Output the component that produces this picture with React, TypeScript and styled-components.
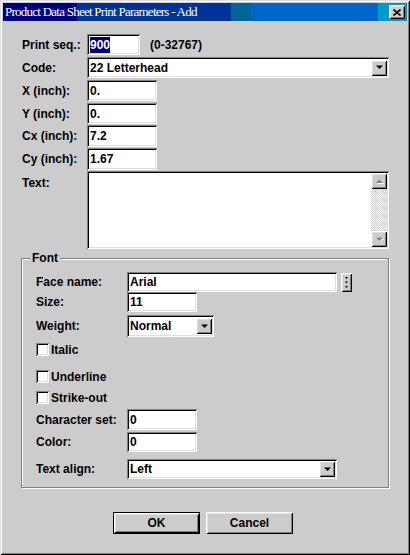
import React from 'react'
import styled, { createGlobalStyle, css } from 'styled-components'

const GRAY = '#cccccc'
const DARK = '#808080'
const LIGHT = '#dfdfdf'

const GlobalStyle = createGlobalStyle`
  html, body {
    margin: 0;
    padding: 0;
    background: ${GRAY};
  }
  body {
    font-family: 'Liberation Sans', Arial, sans-serif;
  }
`

const raised = css`
  background: ${GRAY};
  box-shadow: inset 1px 1px 0 #fff, inset -1px -1px 0 #000, inset 2px 2px 0 ${LIGHT},
    inset -2px -2px 0 ${DARK};
`

const sunken = css`
  background: #fff;
  box-shadow: inset 1px 1px 0 ${DARK}, inset -1px -1px 0 #fff, inset 2px 2px 0 #000,
    inset -2px -2px 0 ${LIGHT};
`

const Window = styled.div`
  width: 410px;
  height: 555px;
  box-sizing: border-box;
  padding: 3px;
  background: ${GRAY};
  box-shadow: inset 1px 1px 0 ${LIGHT}, inset -1px -1px 0 #000, inset 2px 2px 0 #fff,
    inset -2px -2px 0 ${DARK};
  display: flex;
  flex-direction: column;
`

const TitleBar = styled.div`
  height: 18px;
  display: flex;
  align-items: center;
  justify-content: space-between;
  padding: 0 2px;
  background: linear-gradient(
    to right,
    #000080 0 74px,
    #003399 74px 228px,
    #006699 228px 248px,
    #0066cc 248px 375px,
    #0099cc 375px
  );
`

const Title = styled.span`
  color: #fff;
  font-family: 'Liberation Serif', 'Times New Roman', serif;
  font-size: 13px;
  letter-spacing: -0.75px;
  white-space: nowrap;
`

const CloseButton = styled.div`
  ${raised};
  width: 16px;
  height: 14px;
  display: flex;
  align-items: center;
  justify-content: center;
`

const Body = styled.div`
  flex: 1;
  padding: 13px 18px 0 19px;
  display: flex;
  flex-direction: column;
`

const Row = styled.div<{ $top?: number; $h?: number }>`
  display: flex;
  align-items: center;
  margin-top: ${({ $top }) => $top ?? 0}px;
  height: ${({ $h }) => $h ?? 21}px;
`

const TopRow = styled(Row)`
  align-items: flex-start;
`

const Label = styled.div<{ $w: number }>`
  width: ${({ $w }) => $w}px;
  flex-shrink: 0;
  font-size: 12px;
  font-weight: bold;
  color: #000;
  white-space: nowrap;
`

const TopLabel = styled(Label)`
  padding-top: 5px;
`

const Field = styled.div<{ $w?: number; $h?: number }>`
  ${sunken};
  box-sizing: border-box;
  width: ${({ $w }) => ($w ? `${$w}px` : 'auto')};
  flex: ${({ $w }) => ($w ? '0 0 auto' : '1')};
  height: ${({ $h }) => $h ?? 21}px;
  padding: 0 2px 0 3px;
  display: flex;
  align-items: center;
  font-size: 12px;
  font-weight: bold;
  color: #000;
`

const Selected = styled.span`
  background: #000080;
  color: #fff;
  padding: 1px 0;
`

const Hint = styled.span`
  margin-left: 10px;
  font-size: 12px;
  font-weight: bold;
`

const ComboText = styled.span`
  flex: 1;
`

const DropButton = styled.div`
  ${raised};
  width: 16px;
  height: 16px;
  display: flex;
  align-items: center;
  justify-content: center;
`

const TextArea = styled.div`
  ${sunken};
  box-sizing: border-box;
  flex: 1;
  height: 78px;
  padding: 2px;
  display: flex;
  justify-content: flex-end;
`

const ScrollBar = styled.div`
  width: 16px;
  display: flex;
  flex-direction: column;
`

const ScrollButton = styled(DropButton)``

const Track = styled.div`
  flex: 1;
  background-color: ${GRAY};
  background-image: repeating-conic-gradient(#fff 0 25%, ${GRAY} 0 50%);
  background-size: 2px 2px;
`

const Group = styled.div`
  position: relative;
  margin: 9px 0 0 -1px;
  width: 368px;
  box-sizing: border-box;
  border: 1px solid ${DARK};
  box-shadow: inset 1px 1px 0 #fff, 1px 1px 0 #fff;
  padding: 13px 0 8px 14px;
`

const Legend = styled.span`
  position: absolute;
  top: -8px;
  left: 8px;
  padding: 0 2px;
  background: ${GRAY};
  font-size: 12px;
  font-weight: bold;
`

const SpinButton = styled.div`
  ${raised};
  width: 11px;
  height: 19px;
  margin-left: 4px;
  display: flex;
  align-items: center;
  justify-content: center;
`

const Check = styled.label<{ $top: number }>`
  display: flex;
  align-items: center;
  gap: 2px;
  height: 13px;
  margin-top: ${({ $top }) => $top}px;
  font-size: 12px;
  font-weight: bold;
`

const Box = styled.span`
  ${sunken};
  width: 13px;
  height: 13px;
  box-sizing: border-box;
`

const ButtonBar = styled.div`
  display: flex;
  justify-content: center;
  gap: 6px;
  margin-top: 24px;
  padding-right: 5px;
`

const Button = styled.div<{ $default?: boolean }>`
  ${raised};
  width: 87px;
  height: 22px;
  box-sizing: border-box;
  display: flex;
  align-items: center;
  justify-content: center;
  font-size: 12px;
  font-weight: bold;
  ${({ $default }) =>
    $default &&
    css`
      border: 1px solid #000;
    `}
`

const Arrow = ({ up, disabled }: { up?: boolean; disabled?: boolean }) => (
  <svg width="7" height="5" viewBox="0 0 7 5" style={{ overflow: 'visible' }}>
    {disabled && <path d={up ? 'M1 5h7L4.5 1.5z' : 'M1 1h7L4.5 4.5z'} fill="#fff" />}
    <path d={up ? 'M0 4h7L3.5 0.5z' : 'M0 0.5h7L3.5 4z'} fill={disabled ? DARK : '#000'} />
  </svg>
)

const Combo = ({ value, w, h }: { value: string; w?: number; h?: number }) => (
  <Field $w={w} $h={h}>
    <ComboText>{value}</ComboText>
    <DropButton>
      <Arrow />
    </DropButton>
  </Field>
)

const App: React.FC = () => {
  return (
    <Window>
      <GlobalStyle />
      <TitleBar>
        <Title>Product Data Sheet Print Parameters - Add</Title>
        <CloseButton>
          <svg width="8" height="7" viewBox="0 0 8 7">
            <path d="M0.5 0.5l7 6M7.5 0.5l-7 6" stroke="#000" strokeWidth="1.6" />
          </svg>
        </CloseButton>
      </TitleBar>
      <Body>
        <Row>
          <Label $w={65}>Print seq.:</Label>
          <Field $w={53}>
            <Selected>900</Selected>
          </Field>
          <Hint>(0-32767)</Hint>
        </Row>
        <Row $top={2}>
          <Label $w={65}>Code:</Label>
          <Combo value="22 Letterhead" />
        </Row>
        <Row $top={2}>
          <Label $w={65}>X (inch):</Label>
          <Field $w={70}>0.</Field>
        </Row>
        <Row $top={2}>
          <Label $w={65}>Y (inch):</Label>
          <Field $w={70}>0.</Field>
        </Row>
        <Row $top={1} $h={22}>
          <Label $w={65}>Cx (inch):</Label>
          <Field $w={70} $h={22}>7.2</Field>
        </Row>
        <Row $top={1} $h={22}>
          <Label $w={65}>Cy (inch):</Label>
          <Field $w={70} $h={22}>1.67</Field>
        </Row>
        <TopRow $top={1} $h={78}>
          <TopLabel $w={65}>Text:</TopLabel>
          <TextArea>
            <ScrollBar>
              <ScrollButton>
                <Arrow up disabled />
              </ScrollButton>
              <Track />
              <ScrollButton>
                <Arrow disabled />
              </ScrollButton>
            </ScrollBar>
          </TextArea>
        </TopRow>

        <Group>
          <Legend>Font</Legend>
          <Row $h={20}>
            <Label $w={91}>Face name:</Label>
            <Field $w={210} $h={20}>Arial</Field>
            <SpinButton>
              <svg width="3" height="11" viewBox="0 0 3 11">
                <path d="M0 0h3L1.5 2zM0 4.5h3L1.5 6.5zM0 9h3L1.5 11z" fill="#000" />
              </svg>
            </SpinButton>
          </Row>
          <Row $h={20}>
            <Label $w={91}>Size:</Label>
            <Field $w={70} $h={20}>11</Field>
          </Row>
          <Row $top={3} $h={22}>
            <Label $w={91}>Weight:</Label>
            <Combo value="Normal" w={87} h={22} />
          </Row>
          <Check $top={6}>
            <Box />
            Italic
          </Check>
          <Check $top={14}>
            <Box />
            Underline
          </Check>
          <Check $top={8}>
            <Box />
            Strike-out
          </Check>
          <Row $top={5}>
            <Label $w={91}>Character set:</Label>
            <Field $w={70}>0</Field>
          </Row>
          <Row $top={2} $h={20}>
            <Label $w={91}>Color:</Label>
            <Field $w={70} $h={20}>0</Field>
          </Row>
          <Row $top={7} $h={20}>
            <Label $w={91}>Text align:</Label>
            <Combo value="Left" w={210} h={20} />
          </Row>
        </Group>

        <ButtonBar>
          <Button $default>OK</Button>
          <Button>Cancel</Button>
        </ButtonBar>
      </Body>
    </Window>
  )
}

export default App
